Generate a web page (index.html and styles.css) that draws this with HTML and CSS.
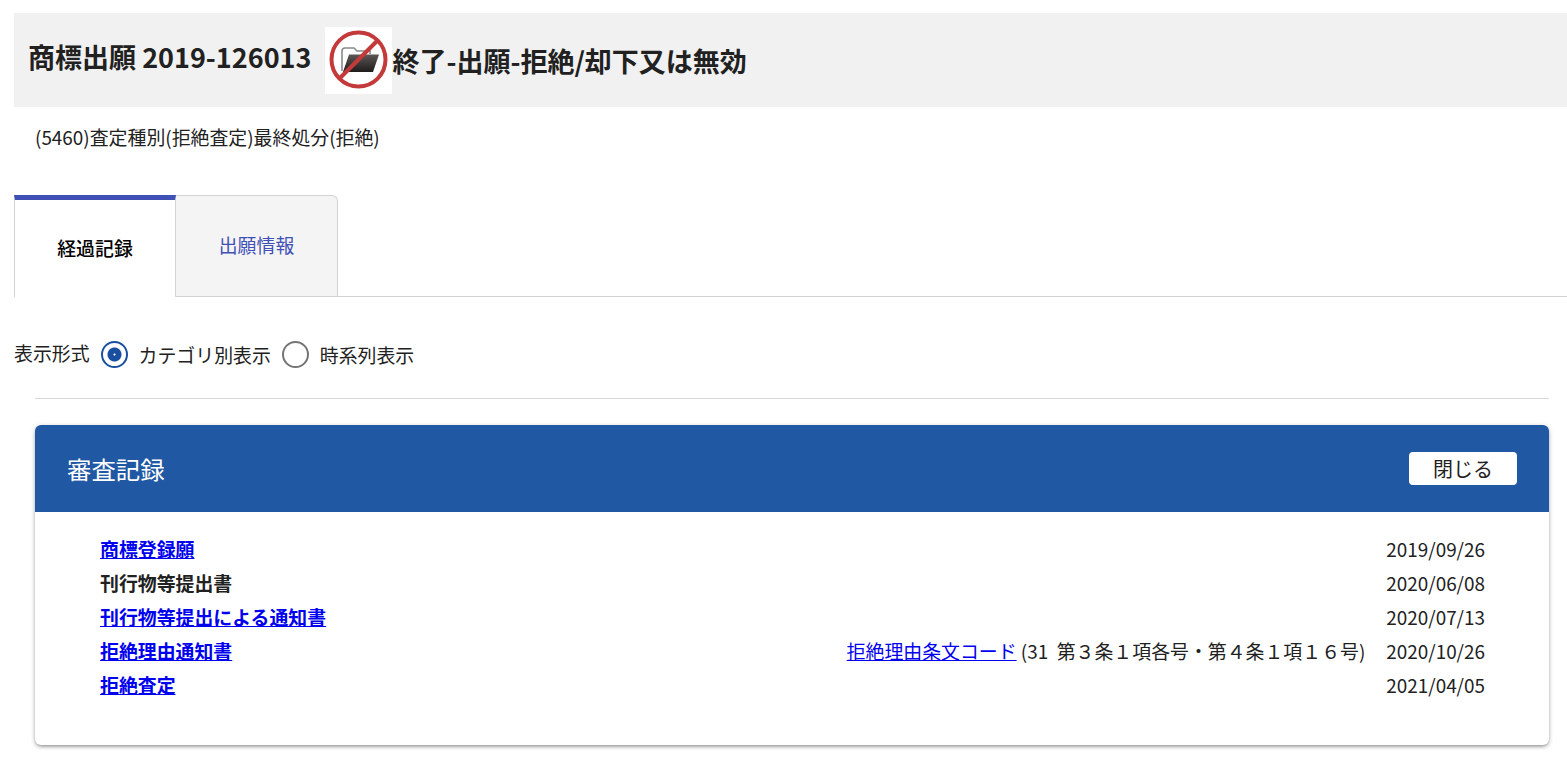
FILE: index.html
```html
<!DOCTYPE html>
<html lang="ja">
<head>
    <meta charset="UTF-8">
    <title>商標出願 2019-126013</title>
    <link rel="stylesheet" href="styles.css">
</head>
<body>
    <div class="title-bar">
        <h2 class="case-no">商標出願 2019-126013</h2>
        <span class="status-icon">
            <svg width="67" height="67" viewBox="0 0 67 67">
                <defs>
                    <linearGradient id="folder-front" x1="0" y1="0" x2="0" y2="1">
                        <stop offset="0" stop-color="#5c5656"/>
                        <stop offset="1" stop-color="#1f1c1c"/>
                    </linearGradient>
                </defs>
                <path d="M17 44 V24 Q17 21 20 21 H29 L32 24 H45 V27" fill="none" stroke="#8a8a8a" stroke-width="1.6"/>
                <path d="M18 45 L24 27.5 H54 L48 45 Z" fill="url(#folder-front)"/>
                <circle cx="33.5" cy="32.5" r="27" fill="none" stroke="#c43a3a" stroke-width="4"/>
                <line x1="14" y1="52" x2="53" y2="13" stroke="#c43a3a" stroke-width="4"/>
            </svg>
        </span>
        <h2 class="status">終了-出願-拒絶/却下又は無効</h2>
    </div>
    <p class="sub-status">(5460)査定種別(拒絶査定)最終処分(拒絶)</p>

    <div class="tabs">
        <div class="tab tab-active">経過記録</div>
        <div class="tab tab-other">出願情報</div>
    </div>

    <div class="view-mode">
        <span class="view-label">表示形式</span>
        <span class="radio radio-on"></span>
        <span class="radio-text">カテゴリ別表示</span>
        <span class="radio"></span>
        <span class="radio-text">時系列表示</span>
    </div>
    <hr class="rule">

    <div class="panel">
        <div class="panel-head">
            <span class="panel-title">審査記録</span>
            <button class="close-button">閉じる</button>
        </div>
        <div class="panel-body">
            <div class="record">
                <a class="record-name" href="#">商標登録願</a>
                <span class="record-date">2019/09/26</span>
            </div>
            <div class="record">
                <span class="record-name">刊行物等提出書</span>
                <span class="record-date">2020/06/08</span>
            </div>
            <div class="record">
                <a class="record-name" href="#">刊行物等提出による通知書</a>
                <span class="record-date">2020/07/13</span>
            </div>
            <div class="record">
                <a class="record-name" href="#">拒絶理由通知書</a>
                <span class="record-note"><a href="#">拒絶理由条文コード</a> (31&nbsp; 第３条１項各号・第４条１項１６号)</span>
                <span class="record-date">2020/10/26</span>
            </div>
            <div class="record">
                <a class="record-name" href="#">拒絶査定</a>
                <span class="record-date">2021/04/05</span>
            </div>
        </div>
    </div>
</body>
</html>
```

FILE: styles.css
```css
html, body {
    margin: 0;
    padding: 0;
}
body {
    font-family: "Noto Sans CJK JP", "Noto Sans", sans-serif;
    font-size: 18.9px;
    color: #212121;
    background: #fff;
    padding: 13px 0 17px 14px;
    overflow-x: hidden;
}
.title-bar {
    display: flex;
    align-items: center;
    height: 94px;
    padding-left: 14px;
    background: #f1f1f1;
}
.case-no, .status {
    margin: 0;
    font-size: 27px;
    font-weight: 700;
    line-height: 1.4;
}
.case-no {
    margin-top: -6px;
}
.status {
    margin-top: 1px;
}
.status-icon {
    display: block;
    width: 67px;
    height: 67px;
    margin-left: 14px;
    background: #fff;
}
.status-icon svg {
    display: block;
    filter: blur(0.4px);
}
.sub-status {
    margin: 16px 0 0 21px;
    line-height: 27px;
}

.tabs {
    display: flex;
    height: 102px;
    margin-top: 45px;
    border-bottom: 1px solid #d2d2d2;
    box-sizing: border-box;
}
.tab {
    width: 162px;
    box-sizing: border-box;
    text-align: center;
}
.tab-active {
    border-top: 5px solid #3f51b5;
    border-left: 1px solid #d2d2d2;
    border-right: 1px solid #d2d2d2;
    background: #fff;
    color: #000;
    height: 102px;
    padding-top: 34px;
    line-height: 28px;
    font-weight: 500;
}
.tab-other {
    border-top: 1px solid #d2d2d2;
    border-right: 1px solid #d2d2d2;
    border-top-right-radius: 6px;
    background: #f4f4f4;
    color: #3f51b5;
    padding-top: 35px;
    line-height: 28px;
}

.view-mode {
    display: flex;
    align-items: center;
    height: 28px;
    margin-top: 43px;
}
.view-label {
    margin-top: -4px;
    margin-right: 11px;
}
.radio {
    width: 27px;
    height: 27px;
    box-sizing: border-box;
    border: 2px solid #757575;
    border-radius: 50%;
    background: #fff;
}
.radio-on {
    border-color: #1a4fa0;
    background: radial-gradient(circle, #fff 0 0.5px, #1a4fa0 1.5px 6.5px, #fff 7.5px);
}
.radio-text {
    margin: 0 11px 0 11px;
}
.rule {
    margin: 30px 18px 0 21px;
    border: 0;
    border-top: 1px solid #d8d8d8;
}

.panel {
    margin: 26px 18px 0 21px;
    height: 320px;
    border-radius: 6px;
    background: #fff;
    box-shadow: 0 2px 4px -1px rgba(0, 0, 0, 0.5), 0 0 6px rgba(0, 0, 0, 0.08);
}
.panel-head {
    display: flex;
    align-items: center;
    justify-content: space-between;
    height: 87px;
    padding: 0 32px;
    background: #2158a4;
    border-radius: 6px 6px 0 0;
}
.panel-title {
    color: #fff;
    font-size: 24.4px;
}
.close-button {
    width: 108px;
    height: 33px;
    padding: 0;
    border: 0;
    border-radius: 4px;
    background: #fff;
    color: #212121;
    font-family: inherit;
    font-size: 20px;
}
.panel-body {
    padding: 19px 64px 0 65px;
}
.record {
    display: flex;
    align-items: center;
    height: 34px;
}
.record-name {
    font-weight: 700;
    margin-right: auto;
}
a {
    color: #0000ee;
}
.record-note {
    margin-right: 21px;
}
.record-date {
    white-space: nowrap;
}
```
